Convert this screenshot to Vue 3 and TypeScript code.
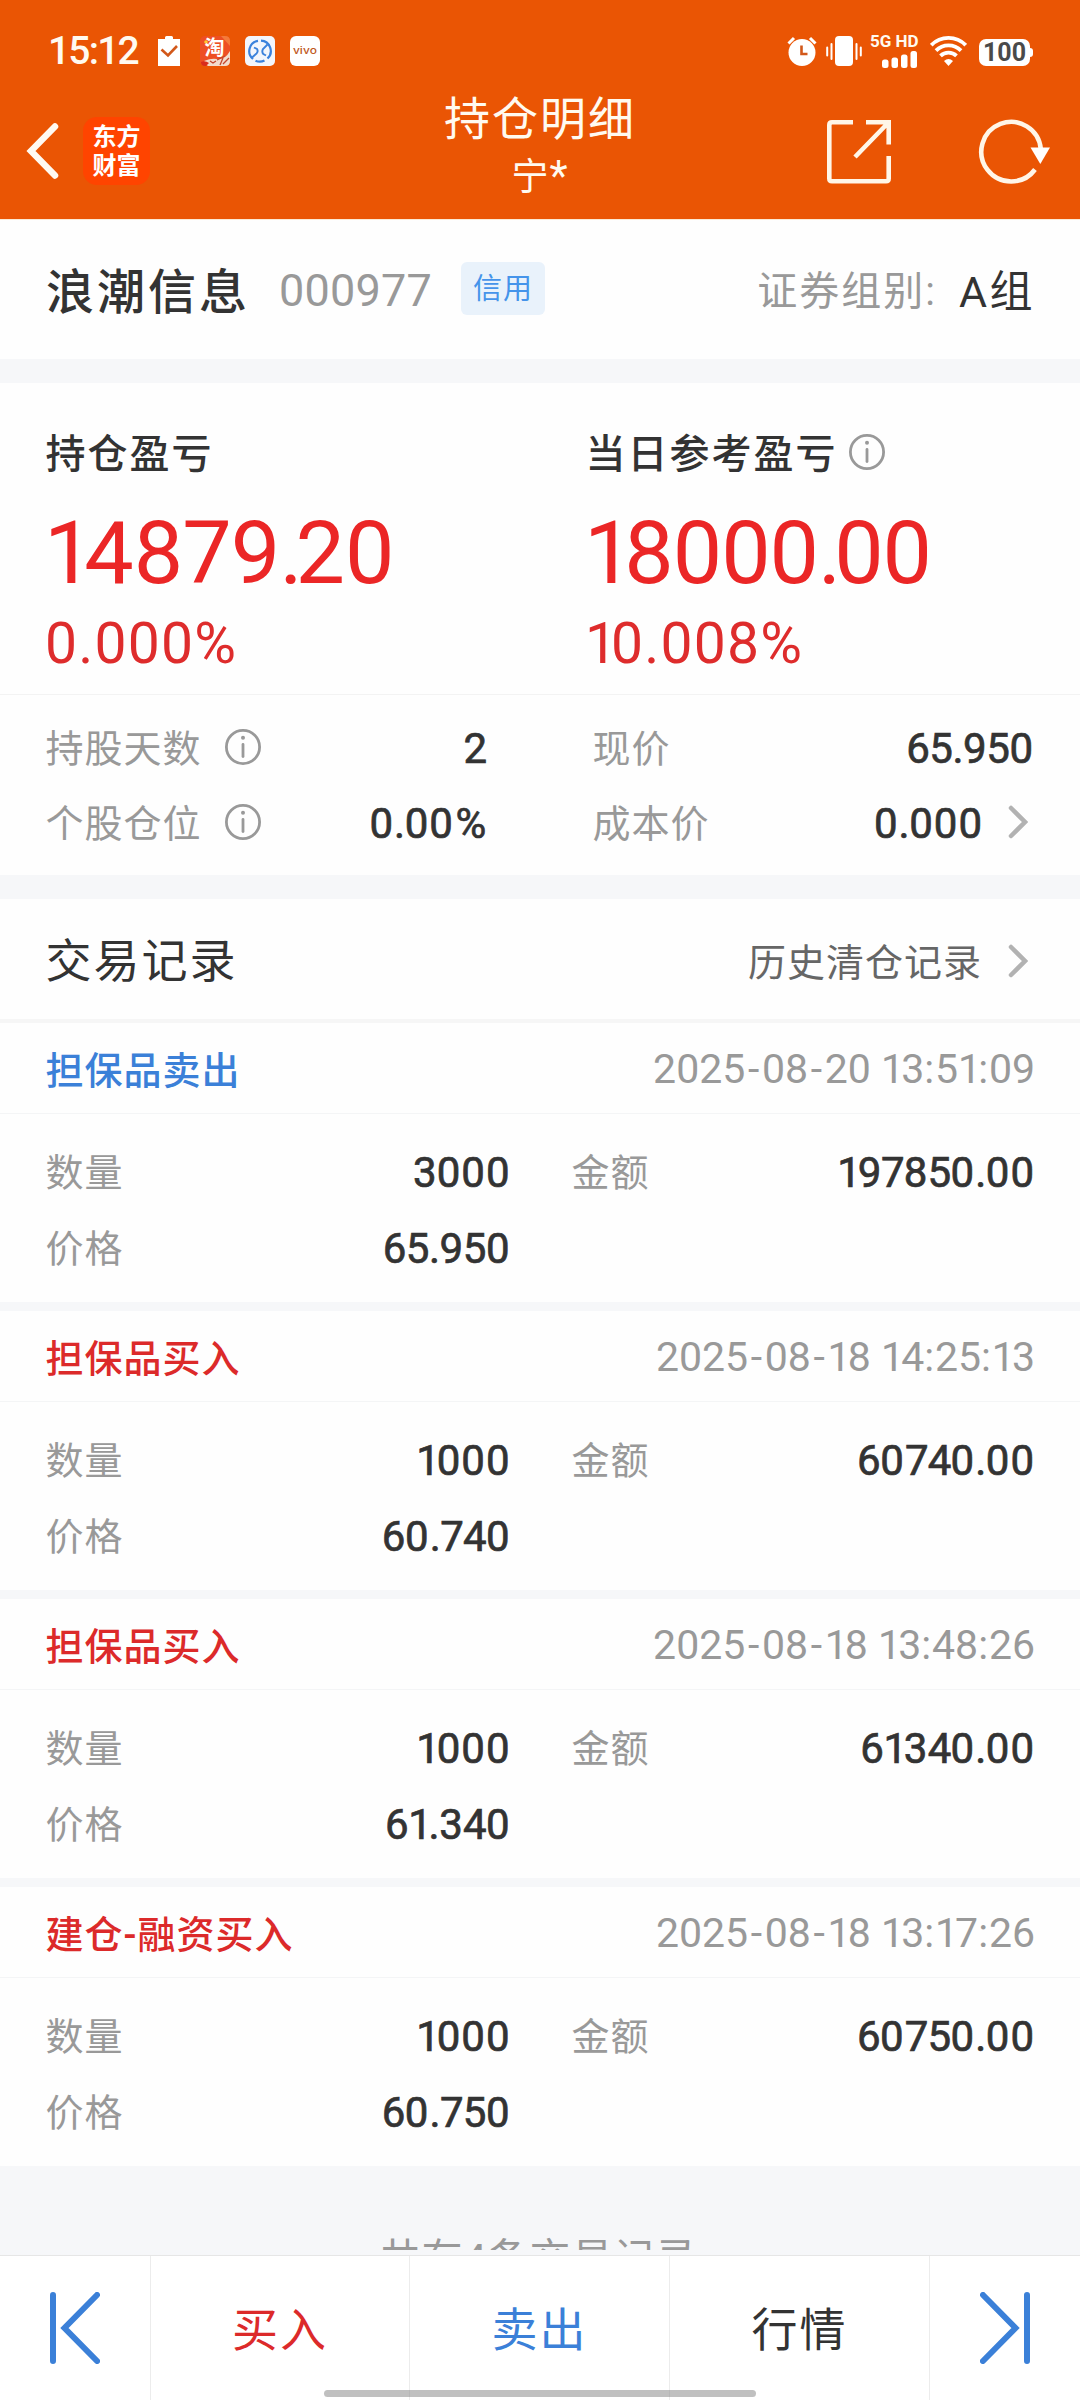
<script setup lang="ts">
import { h, type FunctionalComponent } from 'vue'

interface TradeRecord {
  title: string
  side: 'buy' | 'sell'
  time: string
  quantity: string
  amount: string
  price: string
}

const records: TradeRecord[] = [
  { title: '担保品卖出', side: 'sell', time: '2025-08-20 13:51:09', quantity: '3000', amount: '197850.00', price: '65.950' },
  { title: '担保品买入', side: 'buy', time: '2025-08-18 14:25:13', quantity: '1000', amount: '60740.00', price: '60.740' },
  { title: '担保品买入', side: 'buy', time: '2025-08-18 13:48:26', quantity: '1000', amount: '61340.00', price: '61.340' },
  { title: '建仓-融资买入', side: 'buy', time: '2025-08-18 13:17:26', quantity: '1000', amount: '60750.00', price: '60.750' },
]

const facts: { label: string; value: string }[] = [
  { label: '持股天数', value: '2' },
  { label: '个股仓位', value: '0.00%' },
]

// Proportional spacing for figures, in em, per character.
type Spacing = Record<string, number>
const tables: Record<string, Spacing> = {
  value: { '0': 0.024, '2': 0.024, '.': -0.012, '1': -0.076, '3': 0.004, '4': -0.016, '5': -0.011, '6': -0.011, '7': -0.021, '8': 0.004, '9': -0.011, '%': 0.08 },
  hero: { '.': -0.08, '1': -0.105, '0': -0.012, '2': 0, '4': 0, '7': -0.01, '8': -0.01, '9': -0.01 },
  time: { '-': 0.13, '1': -0.07, ':': 0.02 },
}

// Characters with equal spacing share one run.
const Figures: FunctionalComponent<{ text: string; table: string }> = (props) => {
  const runs: { text: string; gap: number }[] = []
  for (const c of props.text) {
    const gap = tables[props.table][c] ?? 0
    const last = runs[runs.length - 1]
    if (last && last.gap === gap && gap <= 0.024) last.text += c
    else runs.push({ text: c, gap })
  }
  return h(
    'span',
    runs.map(({ text, gap }) => {
      const style = gap > 0.024
        ? { marginLeft: `${gap / 2}em`, marginRight: `${gap / 2}em` }
        : { letterSpacing: `${gap}em` }
      return h('span', { style }, text)
    }),
  )
}
Figures.props = ['text', 'table']
</script>

<template>
  <div class="screen">
    <header class="header">
      <div class="status">
        <span class="clock">15:12</span>
        <svg class="s-clip" width="22" height="30" viewBox="0 0 22 30">
          <path fill="#fff" d="M0 3h7V1.500Q7 0 8.500 0h5Q15 0 15 1.500V3h7v27H0z" />
          <path d="M3.500 13.500l6.500 6 9-9.500" fill="none" stroke="#d2581a" stroke-width="2.600" />
        </svg>
        <svg class="s-app" width="30" height="30" viewBox="0 0 30 30">
          <rect width="30" height="30" rx="5" fill="#ee4f24" />
          <path d="M21 0h4q5 0 5 5v5z" fill="#f47a3a" />
          <path d="M4 25q7-3 13-2 8 1 13-8v10q0 5-5 5H8q-3-2-4-5z" fill="#f3dccb" />
          <path d="M1 26q4-2 8 1l-3 3H5q-4 0-4-4z" fill="#d92c1c" />
          <path d="M10 25l3 2 3-2M20 29l3-7M23 28l6-6M17 24l8-4" stroke="#c4452c" stroke-width="1.300" fill="none" />
          <circle cx="6" cy="6" r="1.800" fill="#ffc933" />
          <text x="4.500" y="19" class="tao">淘</text>
        </svg>
        <svg class="s-app" width="30" height="30" viewBox="0 0 30 30">
          <rect width="30" height="30" rx="5" fill="#f3f6fc" />
          <path d="M8 23A10.300 10.300 0 0 1 13 4.900M16 4.700A10.300 10.300 0 0 1 22.500 22.500M19.500 24.500A10.300 10.300 0 0 1 10.500 24.700" fill="none" stroke="#3b82dc" stroke-width="2.200" />
          <path d="M9 11.500l3 1.500q1.500 2.500-.5 4.500l-5 4.500M22.500 8.500l-4.500 4.500q-1.500 3 .3 5l2.700 1.500" fill="none" stroke="#3b82dc" stroke-width="1.900" />
        </svg>
        <svg class="s-app" width="30" height="30" viewBox="0 0 30 30">
          <rect width="30" height="30" rx="6" fill="#fff" />
          <text x="3" y="18" class="vivo" textLength="24" lengthAdjust="spacingAndGlyphs">vivo</text>
        </svg>

        <div class="status-right">
          <svg width="30" height="30" viewBox="0 0 30 30">
            <circle cx="15" cy="16.500" r="13.500" fill="#fff" />
            <path d="M1.500 7.500L7 2M28.500 7.500L23 2" stroke="#fff" stroke-width="3" />
            <path d="M14.500 9.500V18H20.500" fill="none" stroke="#d2581a" stroke-width="2.600" />
          </svg>
          <svg class="s-vib" width="36" height="30" viewBox="0 0 36 30">
            <rect x="9" width="18" height="30" rx="4" fill="#fff" />
            <path d="M5.500 8v15M1.200 11.500v8M30.500 8v15M34.800 11.500v8" stroke="#fff" stroke-width="2" stroke-linecap="round" />
          </svg>
          <div class="signal">
            <span class="net">5G HD</span>
            <svg width="36" height="17" viewBox="0 0 36 17">
              <rect x="0" y="8.500" width="6.500" height="8.500" rx="2.500" fill="#fff" />
              <rect x="9.500" y="6.500" width="6.500" height="10.500" rx="2.500" fill="#fff" />
              <rect x="19" y="3.500" width="6.500" height="13.500" rx="2.500" fill="#fff" />
              <rect x="28.500" y="0" width="6.500" height="17" rx="2.500" fill="#fff" />
            </svg>
          </div>
          <svg class="s-wifi" width="37" height="30" viewBox="0 0 37 30">
            <g fill="none" stroke="#fff" stroke-width="3.800">
              <path d="M1.300 9.200A24 24 0 0 1 35.700 9.200" />
              <path d="M6 14.700A17.500 17.500 0 0 1 31 14.700" />
              <path d="M10.500 19.900A11.500 11.500 0 0 1 26.500 19.900" />
            </g>
            <path d="M14 25Q18.500 21 23 25L18.500 30z" fill="#fff" />
          </svg>
          <div class="battery"><span>100</span></div>
        </div>
      </div>

      <div class="nav">
        <div class="nav-left">
          <svg class="back" width="34" height="58" viewBox="0 0 34 58">
            <path d="M29 4.500L5 29L29 53.500" fill="none" stroke="#fffaf2" stroke-width="6.500" stroke-linecap="round" stroke-linejoin="miter" />
          </svg>
          <div class="logo">东方<br />财富</div>
        </div>
        <div class="nav-title">
          <span class="title">持仓明细</span>
          <span class="subtitle">宁<span class="star">*</span></span>
        </div>
        <div class="nav-right">
          <svg class="share" width="64" height="64" viewBox="0 0 64 64">
            <path d="M26 2.300H5Q2.300 2.300 2.300 5V58.500Q2.300 61.300 5 61.300H59Q61.700 61.300 61.700 58.500V36M39 2.300H61.700V24.500M61 3L28 37" fill="none" stroke="#fff6e8" stroke-width="4.600" />
          </svg>
          <svg class="reload" width="74" height="66" viewBox="0 0 74 66">
            <path d="M57 51.500A29.800 29.800 0 1 1 62.800 31" fill="none" stroke="#fff6e8" stroke-width="4.600" />
            <path d="M52.500 29.500h19.500L62.300 46z" fill="#fff" />
          </svg>
        </div>
      </div>
    </header>

    <section class="stock">
      <span class="name">浪潮信息</span>
      <span class="code">000977</span>
      <span class="tag">信用</span>
      <span class="group-label">证券组别:</span>
      <span class="group">A组</span>
    </section>

    <section class="profit">
      <div class="profit-cols">
        <div class="profit-col">
          <div class="p-label"><span>持仓盈亏</span></div>
          <div class="p-big"><Figures text="14879.20" table="hero" /></div>
          <div class="p-pct">0.000%</div>
        </div>
        <div class="profit-col">
          <div class="p-label">
            <span>当日参考盈亏</span>
            <svg class="info" width="36" height="36" viewBox="0 0 36 36">
              <circle cx="18" cy="18" r="16.600" />
              <path d="M18 15.500v12" />
              <circle class="dot" cx="18" cy="8.800" r="2" />
            </svg>
          </div>
          <div class="p-big"><Figures text="18000.00" table="hero" /></div>
          <div class="p-pct"><span class="one">1</span>0.008%</div>
        </div>
      </div>
      <div class="facts">
        <div class="facts-col left">
          <div v-for="f in facts" :key="f.label" class="fact">
            <span class="key">{{ f.label }}</span>
            <svg class="info" width="36" height="36" viewBox="0 0 36 36">
              <circle cx="18" cy="18" r="16.600" />
              <path d="M18 15.500v12" />
              <circle class="dot" cx="18" cy="8.800" r="2" />
            </svg>
            <Figures class="num" :text="f.value" table="value" />
          </div>
        </div>
        <div class="facts-col right">
          <div class="fact"><span class="key">现价</span><Figures class="num" text="65.950" table="value" /></div>
          <div class="fact">
            <span class="key">成本价</span><Figures class="num" text="0.000" table="value" />
            <svg class="chev" width="20" height="34" viewBox="0 0 20 34"><path d="M3 3L17 17L3 31" /></svg>
          </div>
        </div>
      </div>
    </section>

    <section class="trades">
      <div class="trades-head">
        <span class="trades-title">交易记录</span>
        <span class="history">历史清仓记录</span>
        <svg class="chev" width="20" height="34" viewBox="0 0 20 34"><path d="M3 3L17 17L3 31" /></svg>
      </div>
      <article v-for="r in records" :key="r.time" class="record">
        <div class="record-head">
          <span class="kind" :class="r.side">{{ r.title }}</span>
          <Figures class="time" :text="r.time" table="time" />
        </div>
        <div class="record-body">
          <div class="line">
            <span class="key">数量</span>
            <Figures class="num qty" :text="r.quantity" table="value" />
            <span class="key amount">金额</span>
            <Figures class="num" :text="r.amount" table="value" />
          </div>
          <div class="line">
            <span class="key">价格</span>
            <Figures class="num qty" :text="r.price" table="value" />
          </div>
        </div>
      </article>
    </section>

    <div class="more"><div class="more-text">共有4条交易记录</div></div>

    <footer class="bar">
      <div class="cell side">
        <svg width="50" height="72" viewBox="0 0 50 72">
          <path d="M3 3V69M47 3L14.500 36L47 69" />
        </svg>
      </div>
      <div class="cell buy"><span>买入</span></div>
      <div class="cell sell"><span>卖出</span></div>
      <div class="cell quote"><span>行情</span></div>
      <div class="cell side">
        <svg width="50" height="72" viewBox="0 0 50 72">
          <path d="M47 3V69M3 3L35.500 36L3 69" />
        </svg>
      </div>
      <div class="home"></div>
    </footer>
  </div>
</template>

<style>
body {
  margin: 0;
  background: #fff;
}
</style>

<style scoped>
.screen {
  width: 1080px;
  height: 2400px;
  display: flex;
  flex-direction: column;
  overflow: hidden;
  background: #fefefe;
  color: #333;
  font-family: Roboto, "Noto Sans CJK SC", sans-serif;
  font-kerning: none;
  white-space: pre;
}
svg {
  flex: none;
  display: block;
}
.header {
  height: 219px;
  flex: none;
  background: #ea5504;
  border-bottom: 1px solid #fbe9d4;
  color: #fffaf0;
}
.status {
  height: 84px;
  padding: 18px 47px 0 48px;
  box-sizing: border-box;
  display: flex;
  align-items: center;
}
.clock {
  width: 110px;
  font-size: 39px;
  font-weight: 500;
  line-height: 40px;
  letter-spacing: -1.8px;
}
.s-app {
  margin-left: 15px;
}
.s-clip + .s-app {
  margin-left: 20px;
}
.tao {
  font-family: "Noto Sans CJK SC", sans-serif;
  font-size: 20px;
  font-weight: 700;
  fill: #fff;
}
.vivo {
  font-family: Inter, sans-serif;
  font-size: 9.500px;
  font-weight: 500;
  fill: #c0581c;
}
.status-right {
  margin-left: auto;
  display: flex;
  align-items: center;
}
.s-vib {
  margin-left: 9px;
}
.signal {
  width: 48px;
  height: 34px;
  margin: -1px 0 0 8px;
  display: flex;
  flex-direction: column;
  align-items: flex-end;
  justify-content: space-between;
}
.net {
  width: 48px;
  font-size: 17px;
  font-weight: 700;
  line-height: 14px;
  letter-spacing: 0;
}
.s-wifi {
  margin-left: 12px;
}
.battery {
  width: 51px;
  height: 27px;
  margin: 2px 3px 0 12px;
  border-radius: 7px;
  background: #fff;
  color: #4a4a4a;
  font-size: 25px;
  font-weight: 700;
  line-height: 28px;
  text-align: center;
  position: relative;
}
.battery::after {
  content: "";
  position: absolute;
  right: -3px;
  top: 9px;
  width: 4px;
  height: 9px;
  border-radius: 0 3px 3px 0;
  background: #fff;
}
.nav {
  height: 135px;
  display: grid;
  grid-template-columns: 1fr 300px 1fr;
}
.nav-left {
  display: flex;
  align-items: flex-start;
  padding: 33px 0 0 26px;
}
.back {
  margin-top: 5px;
}
.logo {
  width: 67px;
  height: 68px;
  margin-left: 23px;
  padding-top: 3px;
  box-sizing: border-box;
  border-radius: 14px;
  background: #ff4400;
  color: #fff;
  text-align: center;
  font-size: 24px;
  font-weight: 700;
  line-height: 29px;
  font-family: "Noto Sans CJK SC", sans-serif;
}
.nav-title {
  display: flex;
  flex-direction: column;
  align-items: center;
  padding-top: 5px;
}
.title {
  font-size: 46px;
  letter-spacing: 2px;
  line-height: 60px;
}
.subtitle {
  font-size: 37px;
  line-height: 58px;
  letter-spacing: 1px;
}
.star {
  font-size: 42px;
  line-height: 1;
}
.nav-right {
  display: flex;
  justify-content: flex-end;
  padding: 34px 28px 0 0;
}
.share {
  margin: 2px 87px 0 0;
}
.stock {
  height: 139px;
  flex: none;
  padding: 0 46px;
  border-bottom: 24px solid #f6f7f9;
  display: flex;
  align-items: center;
}
.name {
  margin-top: -4px;
  font-size: 48px;
  font-weight: 500;
  letter-spacing: 3px;
}
.code {
  margin: 2px 0 0 29px;
  color: #999;
  font-size: 45px;
  letter-spacing: 0.200px;
}
.tag {
  width: 84px;
  height: 53px;
  margin: -3px 0 0 29px;
  border-radius: 6px;
  background: #e9f2fb;
  color: #4594ea;
  font-size: 29px;
  letter-spacing: 1px;
  line-height: 55px;
  text-align: center;
}
.group-label {
  margin: -4px 0 0 auto;
  color: #999;
  font-size: 40px;
  letter-spacing: 2px;
}
.group {
  margin: -4px -1px 0 22px;
  font-size: 43px;
  letter-spacing: 2.500px;
}
.profit {
  height: 492px;
  flex: none;
  border-bottom: 24px solid #f6f7f9;
  display: flex;
  flex-direction: column;
}
.profit-cols {
  height: 312px;
  box-sizing: border-box;
  padding: 39px 0 0 46px;
  border-bottom: 1px solid #f3f3f3;
  display: grid;
  grid-template-columns: 540px 1fr;
}
.p-label {
  height: 60px;
  display: flex;
  align-items: center;
  font-size: 40px;
  font-weight: 500;
  letter-spacing: 2px;
}
.p-label span {
  margin: -3px 0 0 -0.500px;
}
.p-label .info {
  margin-left: 11.500px;
}
.info {
  fill: none;
  stroke: #999;
  stroke-width: 2.800;
  stroke-linecap: round;
}
.info .dot {
  fill: #999;
  stroke: none;
}
.p-big {
  margin-left: -2px;
  color: #eb2626;
  font-size: 88px;
  line-height: 142px;
}
.p-pct {
  margin: -10px 0 0 -1px;
  color: #de2c2c;
  font-size: 57px;
  line-height: 60px;
  letter-spacing: 1.200px;
}
.p-pct .one {
  letter-spacing: -6px;
}
.facts {
  display: flex;
  padding-top: 15px;
}
.facts-col.left {
  width: 442px;
  padding-left: 46px;
}
.facts-col.right {
  width: 441px;
  padding-left: 105px;
}
.fact {
  height: 75px;
  display: flex;
  align-items: center;
}
.key {
  margin: -4px 0 0 -0.500px;
  color: #999;
  font-size: 38px;
  letter-spacing: 1px;
}
.fact .info {
  margin: -1px 0 0 23.500px;
}
.num {
  margin: 1px 0 0 auto;
  font-size: 42px;
  -webkit-text-stroke: 0.700px #333;
}
.chev {
  fill: none;
  stroke: #b2b2b2;
  stroke-width: 4.500;
  stroke-linecap: round;
  margin: -1px 6px 0 25px;
}
.trades-head {
  height: 120px;
  padding: 0 46px;
  display: flex;
  align-items: center;
  border-bottom: 4px solid #f6f6f6;
}
.trades-title {
  margin: -4px 0 0 -0.500px;
  font-size: 46px;
  letter-spacing: 2px;
}
.history {
  margin: 1px 0 0 auto;
  color: #666;
  font-size: 38px;
  letter-spacing: 1px;
}
.trades-head .chev {
  margin: 3px 6px 0 26px;
}
.record {
  height: 279px;
  border-bottom: 9px solid #f6f7f9;
}
.record-head {
  height: 91px;
  box-sizing: border-box;
  padding: 2px 45px 0 46px;
  border-bottom: 1px solid #f4f5f6;
  display: flex;
  align-items: center;
  justify-content: space-between;
}
.kind {
  margin: -4px 0 0 -0.500px;
  font-size: 38px;
  font-weight: 500;
  letter-spacing: 1px;
}
.kind.sell {
  color: #3b80d8;
}
.kind.buy {
  color: #dc2a2a;
}
.time {
  color: #999;
  font-size: 41px;
}
.record-body {
  padding: 20px 45px 0 46px;
}
.line {
  height: 76px;
  display: flex;
  align-items: center;
}
.line .key {
  width: 98px;
  margin-top: -6px;
}
.line .qty {
  width: 367px;
  margin-left: 0;
  text-align: right;
}
.line .key.amount {
  margin-left: 61px;
}
.more {
  height: 84px;
  margin-top: -9px;
  padding-top: 9px;
  box-sizing: border-box;
  flex: none;
  background: #f6f7f9;
  overflow: hidden;
}
.more-text {
  margin-top: 54px;
  padding-right: 3px;
  color: #999;
  font-size: 41px;
  letter-spacing: 1px;
  line-height: 60px;
  text-align: center;
}
.bar {
  height: 144px;
  flex: none;
  margin-top: auto;
  background: #fff;
  border-top: 1px solid #e6e6e6;
  box-shadow: 0 -5px 0 #f6f7f9;
  display: grid;
  grid-template-columns: 151px 259px 260px 260px 150px;
  position: relative;
}
.cell {
  border-right: 1px solid #ececec;
  display: flex;
  align-items: center;
  justify-content: center;
  font-size: 46px;
  letter-spacing: 2px;
}
.cell span {
  margin-top: -4px;
}
.cell:nth-child(5) {
  border-right: none;
}
.side svg {
  fill: none;
  stroke: #3b80d8;
  stroke-width: 6;
  stroke-linecap: round;
}
.cell.buy {
  color: #dc2a2a;
}
.cell.sell {
  color: #3b80d8;
}
.home {
  position: absolute;
  left: 324px;
  top: 134px;
  width: 432px;
  height: 7px;
  border-radius: 4px;
  background: rgba(130, 130, 130, 0.5);
}
</style>
